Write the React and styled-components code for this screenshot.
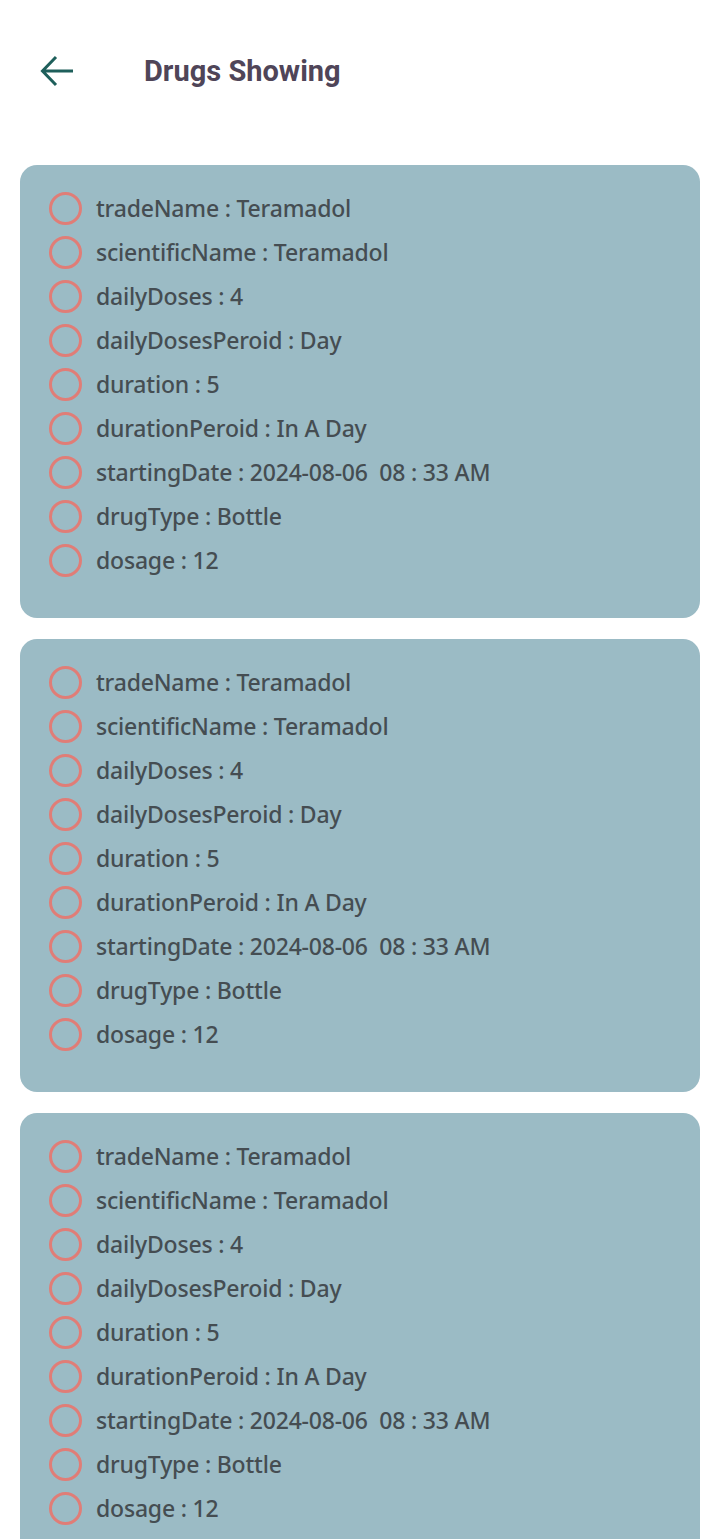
import React from 'react';
import styled, { createGlobalStyle } from 'styled-components';

const GlobalStyle = createGlobalStyle`
  html, body {
    margin: 0;
    padding: 0;
    background: #ffffff;
  }
  * {
    box-sizing: border-box;
  }
`;

const Page = styled.div`
  width: 719px;
  min-height: 1539px;
  background: #ffffff;
  font-family: 'Noto Sans', sans-serif;
`;

const Header = styled.header`
  height: 142px;
  display: flex;
  align-items: center;
  padding: 0 0 0 40px;
  margin-bottom: 23px;
`;

const BackButton = styled.button`
  width: 33px;
  height: 32px;
  padding: 0;
  border: none;
  background: transparent;
  display: flex;
  align-items: center;
  justify-content: center;
  cursor: pointer;
`;

const Title = styled.h1`
  margin: 0 0 0 71px;
  font-family: Roboto, sans-serif;
  font-weight: 700;
  font-size: 29px;
  color: #4f4558;
`;

const List = styled.div`
  display: flex;
  flex-direction: column;
  gap: 21px;
  padding: 0 19px 0 20px;
`;

const Card = styled.div`
  background: #9bbbc5;
  border-radius: 17px;
  padding: 21px 20px 36px 29px;
`;

const Row = styled.div`
  height: 44px;
  display: flex;
  align-items: center;
`;

const Dot = styled.span`
  width: 33px;
  height: 33px;
  border-radius: 50%;
  border: 3px solid #e07d77;
  flex-shrink: 0;
  margin-right: 14px;
`;

const Text = styled.span`
  font-size: 23px;
  font-weight: 500;
  color: #454d52;
  letter-spacing: -0.2px;
  white-space: pre;
`;

const fields = [
  ['tradeName', 'Teramadol'],
  ['scientificName', 'Teramadol'],
  ['dailyDoses', '4'],
  ['dailyDosesPeroid', 'Day'],
  ['duration', '5'],
  ['durationPeroid', 'In A Day'],
  ['startingDate', '2024-08-06  08 : 33 AM'],
  ['drugType', 'Bottle'],
  ['dosage', '12'],
];

const ArrowLeft = () => (
  <svg width="33" height="32" viewBox="0 0 33 32" fill="none">
    <path
      d="M33 16H3M16 2L2.5 16 16 30"
      stroke="#1e5f5b"
      strokeWidth="3"
    />
  </svg>
);

const DrugCard = () => (
  <Card>
    {fields.map(([key, value]) => (
      <Row key={key}>
        <Dot />
        <Text>{`${key} : ${value}`}</Text>
      </Row>
    ))}
  </Card>
);

export default function App() {
  return (
    <Page>
      <GlobalStyle />
      <Header>
        <BackButton>
          <ArrowLeft />
        </BackButton>
        <Title>Drugs Showing</Title>
      </Header>
      <List>
        <DrugCard />
        <DrugCard />
        <DrugCard />
      </List>
    </Page>
  );
}
